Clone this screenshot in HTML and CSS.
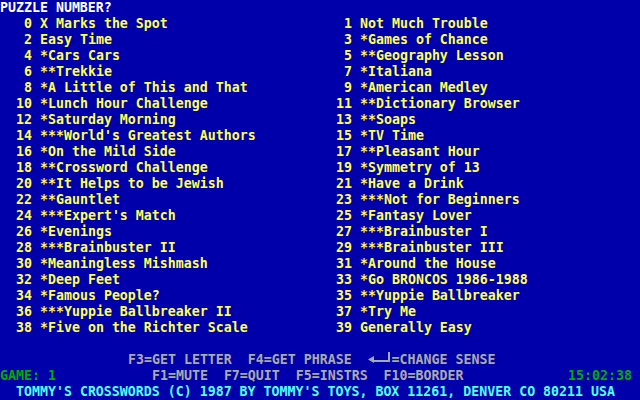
FILE: index.html
```html
<!DOCTYPE html>
<html>
<head>
<meta charset="utf-8">
<link rel="stylesheet" href="styles.css">
</head>
<body>
<div class="screen">
  <div class="row prompt">PUZZLE NUMBER?</div>
  <div class="list">
    <div class="item"><span class="num">0</span><span class="title">X Marks the Spot</span></div>
    <div class="item"><span class="num">1</span><span class="title">Not Much Trouble</span></div>
    <div class="item"><span class="num">2</span><span class="title">Easy Time</span></div>
    <div class="item"><span class="num">3</span><span class="title">*Games of Chance</span></div>
    <div class="item"><span class="num">4</span><span class="title">*Cars Cars</span></div>
    <div class="item"><span class="num">5</span><span class="title">**Geography Lesson</span></div>
    <div class="item"><span class="num">6</span><span class="title">**Trekkie</span></div>
    <div class="item"><span class="num">7</span><span class="title">*Italiana</span></div>
    <div class="item"><span class="num">8</span><span class="title">*A Little of This and That</span></div>
    <div class="item"><span class="num">9</span><span class="title">*American Medley</span></div>
    <div class="item"><span class="num">10</span><span class="title">*Lunch Hour Challenge</span></div>
    <div class="item"><span class="num">11</span><span class="title">**Dictionary Browser</span></div>
    <div class="item"><span class="num">12</span><span class="title">*Saturday Morning</span></div>
    <div class="item"><span class="num">13</span><span class="title">**Soaps</span></div>
    <div class="item"><span class="num">14</span><span class="title">***World's Greatest Authors</span></div>
    <div class="item"><span class="num">15</span><span class="title">*TV Time</span></div>
    <div class="item"><span class="num">16</span><span class="title">*On the Mild Side</span></div>
    <div class="item"><span class="num">17</span><span class="title">**Pleasant Hour</span></div>
    <div class="item"><span class="num">18</span><span class="title">**Crossword Challenge</span></div>
    <div class="item"><span class="num">19</span><span class="title">*Symmetry of 13</span></div>
    <div class="item"><span class="num">20</span><span class="title">**It Helps to be Jewish</span></div>
    <div class="item"><span class="num">21</span><span class="title">*Have a Drink</span></div>
    <div class="item"><span class="num">22</span><span class="title">**Gauntlet</span></div>
    <div class="item"><span class="num">23</span><span class="title">***Not for Beginners</span></div>
    <div class="item"><span class="num">24</span><span class="title">***Expert's Match</span></div>
    <div class="item"><span class="num">25</span><span class="title">*Fantasy Lover</span></div>
    <div class="item"><span class="num">26</span><span class="title">*Evenings</span></div>
    <div class="item"><span class="num">27</span><span class="title">***Brainbuster I</span></div>
    <div class="item"><span class="num">28</span><span class="title">***Brainbuster II</span></div>
    <div class="item"><span class="num">29</span><span class="title">***Brainbuster III</span></div>
    <div class="item"><span class="num">30</span><span class="title">*Meaningless Mishmash</span></div>
    <div class="item"><span class="num">31</span><span class="title">*Around the House</span></div>
    <div class="item"><span class="num">32</span><span class="title">*Deep Feet</span></div>
    <div class="item"><span class="num">33</span><span class="title">*Go BRONCOS 1986-1988</span></div>
    <div class="item"><span class="num">34</span><span class="title">*Famous People?</span></div>
    <div class="item"><span class="num">35</span><span class="title">**Yuppie Ballbreaker</span></div>
    <div class="item"><span class="num">36</span><span class="title">***Yuppie Ballbreaker II</span></div>
    <div class="item"><span class="num">37</span><span class="title">*Try Me</span></div>
    <div class="item"><span class="num">38</span><span class="title">*Five on the Richter Scale</span></div>
    <div class="item"><span class="num">39</span><span class="title">Generally Easy</span></div>
  </div>
  <div class="row"></div>
  <div class="row keys keys-top">F3=GET LETTER  F4=GET PHRASE  <svg class="enter" width="24" height="16" viewBox="0 0 24 16"><polygon points="0,7.5 6,4 6,11" fill="#aaaaaa"/><rect x="6" y="8" width="16" height="2" fill="#aaaaaa"/><rect x="20" y="0" width="2" height="10" fill="#aaaaaa"/></svg>=CHANGE SENSE</div>
  <div class="row status"><span class="game">GAME: 1</span><span class="keys keys-bottom">F1=MUTE  F7=QUIT  F5=INSTRS  F10=BORDER</span><span class="clock">15:02:38</span></div>
  <div class="row credit">TOMMY'S CROSSWORDS (C) 1987 BY TOMMY'S TOYS, BOX 11261, DENVER CO 80211 USA</div>
</div>
</body>
</html>
```
FILE: styles.css
```css
html, body {
  margin: 0;
  padding: 0;
  background: #0000aa;
}
.screen {
  width: 640px;
  height: 400px;
  background: #0000aa;
  font-family: "DejaVu Sans Mono", "Liberation Mono", monospace;
  font-weight: bold;
  font-size: 13.288px;
  line-height: 16px;
  overflow: hidden;
}
.row {
  height: 16px;
  white-space: pre;
}
.prompt {
  color: #ffffff;
}
.list {
  display: grid;
  grid-template-columns: 320px 320px;
  color: #ffff55;
}
.item {
  display: flex;
  height: 16px;
  padding-left: 16px;
  gap: 8px;
  white-space: pre;
}
.num {
  width: 16px;
  text-align: right;
}
.keys {
  color: #aaaaaa;
}
.keys-top {
  padding-left: 128px;
}
.enter {
  display: inline-block;
  vertical-align: top;
}
.status {
  display: flex;
}
.game {
  color: #00aa00;
  width: 152px;
}
.keys-bottom {
  width: 416px;
}
.clock {
  color: #00aa00;
}
.credit {
  color: #55ffff;
  padding-left: 16px;
}
```
